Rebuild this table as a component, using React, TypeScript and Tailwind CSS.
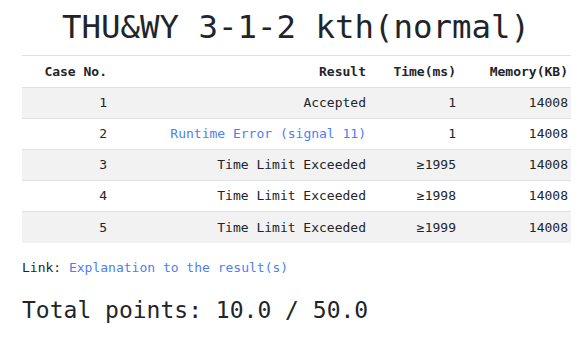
const rows = [
  { id: 1, result: 'Accepted', time: '1', mem: '14008', error: false },
  { id: 2, result: 'Runtime Error (signal 11)', time: '1', mem: '14008', error: true },
  { id: 3, result: 'Time Limit Exceeded', time: '≥1995', mem: '14008', error: false },
  { id: 4, result: 'Time Limit Exceeded', time: '≥1998', mem: '14008', error: false },
  { id: 5, result: 'Time Limit Exceeded', time: '≥1999', mem: '14008', error: false },
];

export default function App() {
  return (
    <div className="w-[588px] h-[337px] bg-white text-[#212529] font-['DejaVu_Sans_Mono',monospace] px-[22px]">
      {/* Title */}
      <h1 className="pl-[40px] pt-[8px] h-[55px] text-[32.4px] leading-[38px] text-[#212529]">
        THU&amp;WY 3-1-2 kth(normal)
      </h1>

      {/* Results table */}
      <table className="w-[549px] text-[13px] border-collapse table-fixed">
        <colgroup>
          <col className="w-[89px]" />
          <col className="w-[259px]" />
          <col className="w-[90px]" />
          <col className="w-[111px]" />
        </colgroup>
        <thead>
          <tr className="h-[32px] border-t border-[#dee2e6] font-bold">
            <th className="text-right pr-[4px]">Case No.</th>
            <th className="text-right pr-[4px]">Result</th>
            <th className="text-right pr-[4px]">Time(ms)</th>
            <th className="text-right pr-[3px]">Memory(KB)</th>
          </tr>
        </thead>
        <tbody>
          {rows.map((r, i) => (
            <tr key={r.id} className={`h-[31px] border-t border-[#dee2e6] ${i % 2 === 0 ? 'bg-[#f2f2f2]' : 'bg-white'}`}>
              <td className="text-right pr-[4px]">{r.id}</td>
              <td className={`text-right pr-[4px] ${r.error ? 'text-[#4d7ef7]' : ''}`}>{r.result}</td>
              <td className="text-right pr-[4px]">{r.time}</td>
              <td className="text-right pr-[3px]">{r.mem}</td>
            </tr>
          ))}
        </tbody>
      </table>

      {/* Link */}
      <p className="mt-[16px] text-[13px] leading-[18px]">
        Link: <a className="text-[#4d7ef7]" href="#">Explanation to the result(s)</a>
      </p>

      {/* Total */}
      <p className="mt-[18px] text-[23px] leading-[30px]">Total points: 10.0 / 50.0</p>
    </div>
  );
}
